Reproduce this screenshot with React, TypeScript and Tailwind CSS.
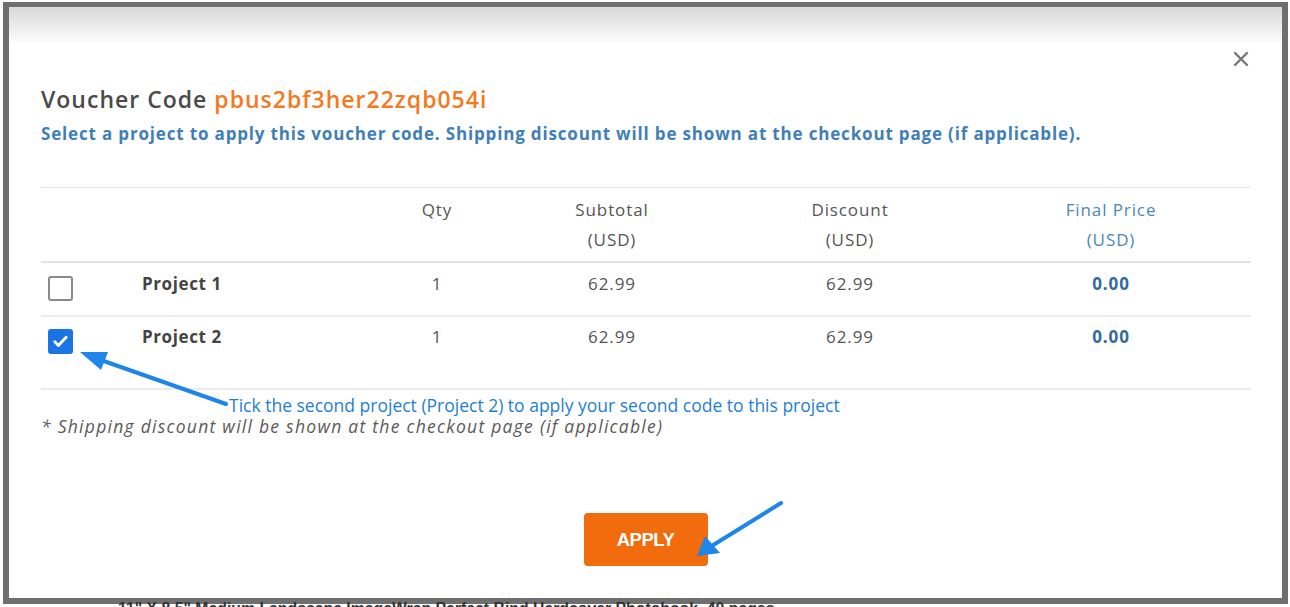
import React from "react";

const rows = [
  { name: "Project 1", qty: 1, subtotal: "62.99", discount: "62.99", final: "0.00", checked: false },
  { name: "Project 2", qty: 1, subtotal: "62.99", discount: "62.99", final: "0.00", checked: true },
];

const cols = "grid grid-cols-[91px_240px_130px_220px_256px_266px]";

function Checkbox({ checked }: { checked: boolean }) {
  if (checked) {
    return (
      <div className="w-[25px] h-[25px] rounded-[3px] bg-[#1b74e4] flex items-center justify-center">
        <svg width="17" height="17" viewBox="0 0 24 24" fill="none" stroke="white" strokeWidth={4} strokeLinecap="round" strokeLinejoin="round">
          <path d="M4 12.5l5 5L20 6" />
        </svg>
      </div>
    );
  }
  return <div className="w-[25px] h-[25px] rounded-[3px] border-2 border-[#8a8a8a] bg-white" />;
}

export default function App() {
  return (
    <div className="w-[1290px] h-[607px] bg-white overflow-hidden relative pt-[2px] pl-[3px] pr-[2px] font-['Open_Sans',sans-serif]">
      <div className="h-[602px] border-[6px] border-t-[5px] border-[#6f6f6f] bg-white flex flex-col">
        {/* faded overlay band */}
        <div className="h-[38px] bg-linear-to-b from-[#d9d9d9] to-white" />

        {/* close */}
        <div className="mt-[4px] h-[20px] flex justify-end pr-[33px] items-center">
          <svg width="16" height="16" viewBox="0 0 16 16" stroke="#777" strokeWidth={2.4} strokeLinecap="round">
            <path d="M2 2l12 12M14 2L2 14" />
          </svg>
        </div>

        <div className="pl-[32px] pr-[31px]">
          <h2 className="mt-[16px] text-[23px] leading-[28px] font-semibold tracking-[1px] text-[#4a4a4a]">
            Voucher Code <span className="text-[#f47920]">pbus2bf3her22zqb054i</span>
          </h2>
          <p className="mt-[10px] text-[17px] leading-[22px] font-bold tracking-[0.83px] text-[#3f7fb5]">
            Select a project to apply this voucher code. Shipping discount will be shown at the checkout page (if applicable).
          </p>

          {/* table */}
          <div className="mt-[42px] border-t border-[#e6e6e6] text-[17px] tracking-[0.9px] text-[#555]">
            <div className={`${cols} pt-[7px] pb-[6px] border-b-2 border-[#e4e4e4] leading-[30px] text-center`}>
              <div />
              <div />
              <div>Qty</div>
              <div>
                Subtotal
                <br />
                (USD)
              </div>
              <div>
                Discount
                <br />
                (USD)
              </div>
              <div className="text-[#4b88ba]">
                Final Price
                <br />
                (USD)
              </div>
            </div>

            {rows.map((r, i) => (
              <div
                key={r.name}
                className={`${cols} ${i === 0 ? "h-[54px] pt-[13px]" : "h-[73px] pt-[12px]"} border-b-2 border-[#ececec] items-start leading-[24px]`}
              >
                <div className="pl-[7px]">
                  <Checkbox checked={r.checked} />
                </div>
                <div className="-mt-[4px] pl-[10px] font-bold tracking-[0.6px] text-[#444]">{r.name}</div>
                <div className="-mt-[4px] text-center">{r.qty}</div>
                <div className="-mt-[4px] text-center">{r.subtotal}</div>
                <div className="-mt-[4px] text-center">{r.discount}</div>
                <div className="-mt-[4px] text-center font-bold text-[#336c9e]">{r.final}</div>
              </div>
            ))}
          </div>

          <p className="mt-[24px] text-[17.5px] leading-[24px] italic tracking-[1.26px] text-[#5a5a5a]">
            * Shipping discount will be shown at the checkout page (if applicable)
          </p>

          <div className="mt-[75px] flex justify-center pr-[1px]">
            <button className="w-[124px] h-[53px] rounded-[4px] bg-[#f26c0d] text-white font-['Liberation_Sans',sans-serif] font-bold text-[18.5px] tracking-tight">
              APPLY
            </button>
          </div>
        </div>
      </div>

      {/* background page text peeking below */}
      <div className="absolute left-[118px] top-[599px] text-[15.8px] leading-[20px] font-bold text-[#333] whitespace-nowrap font-['Liberation_Sans',sans-serif]">
        11" X 8.5" Medium Landscape ImageWrap Perfect Bind Hardcover Photobook, 40 pages
      </div>

      {/* annotations */}
      <div className="absolute left-[229px] top-[394px] text-[17.5px] leading-[22px] text-[#1f7fd0] whitespace-nowrap">
        Tick the second project (Project 2) to apply your second code to this project
      </div>
      <svg className="absolute left-0 top-0 pointer-events-none" width="1290" height="607" viewBox="0 0 1290 607">
        <line x1="226" y1="404" x2="98" y2="359" stroke="#1e86e8" strokeWidth={4} strokeLinecap="round" />
        <polygon points="80,352 108,352 101,370" fill="#1e86e8" />
        <line x1="781" y1="503" x2="710" y2="547" stroke="#1e86e8" strokeWidth={4} strokeLinecap="round" />
        <polygon points="697,556 705,536 720,553" fill="#1e86e8" />
      </svg>
    </div>
  );
}
